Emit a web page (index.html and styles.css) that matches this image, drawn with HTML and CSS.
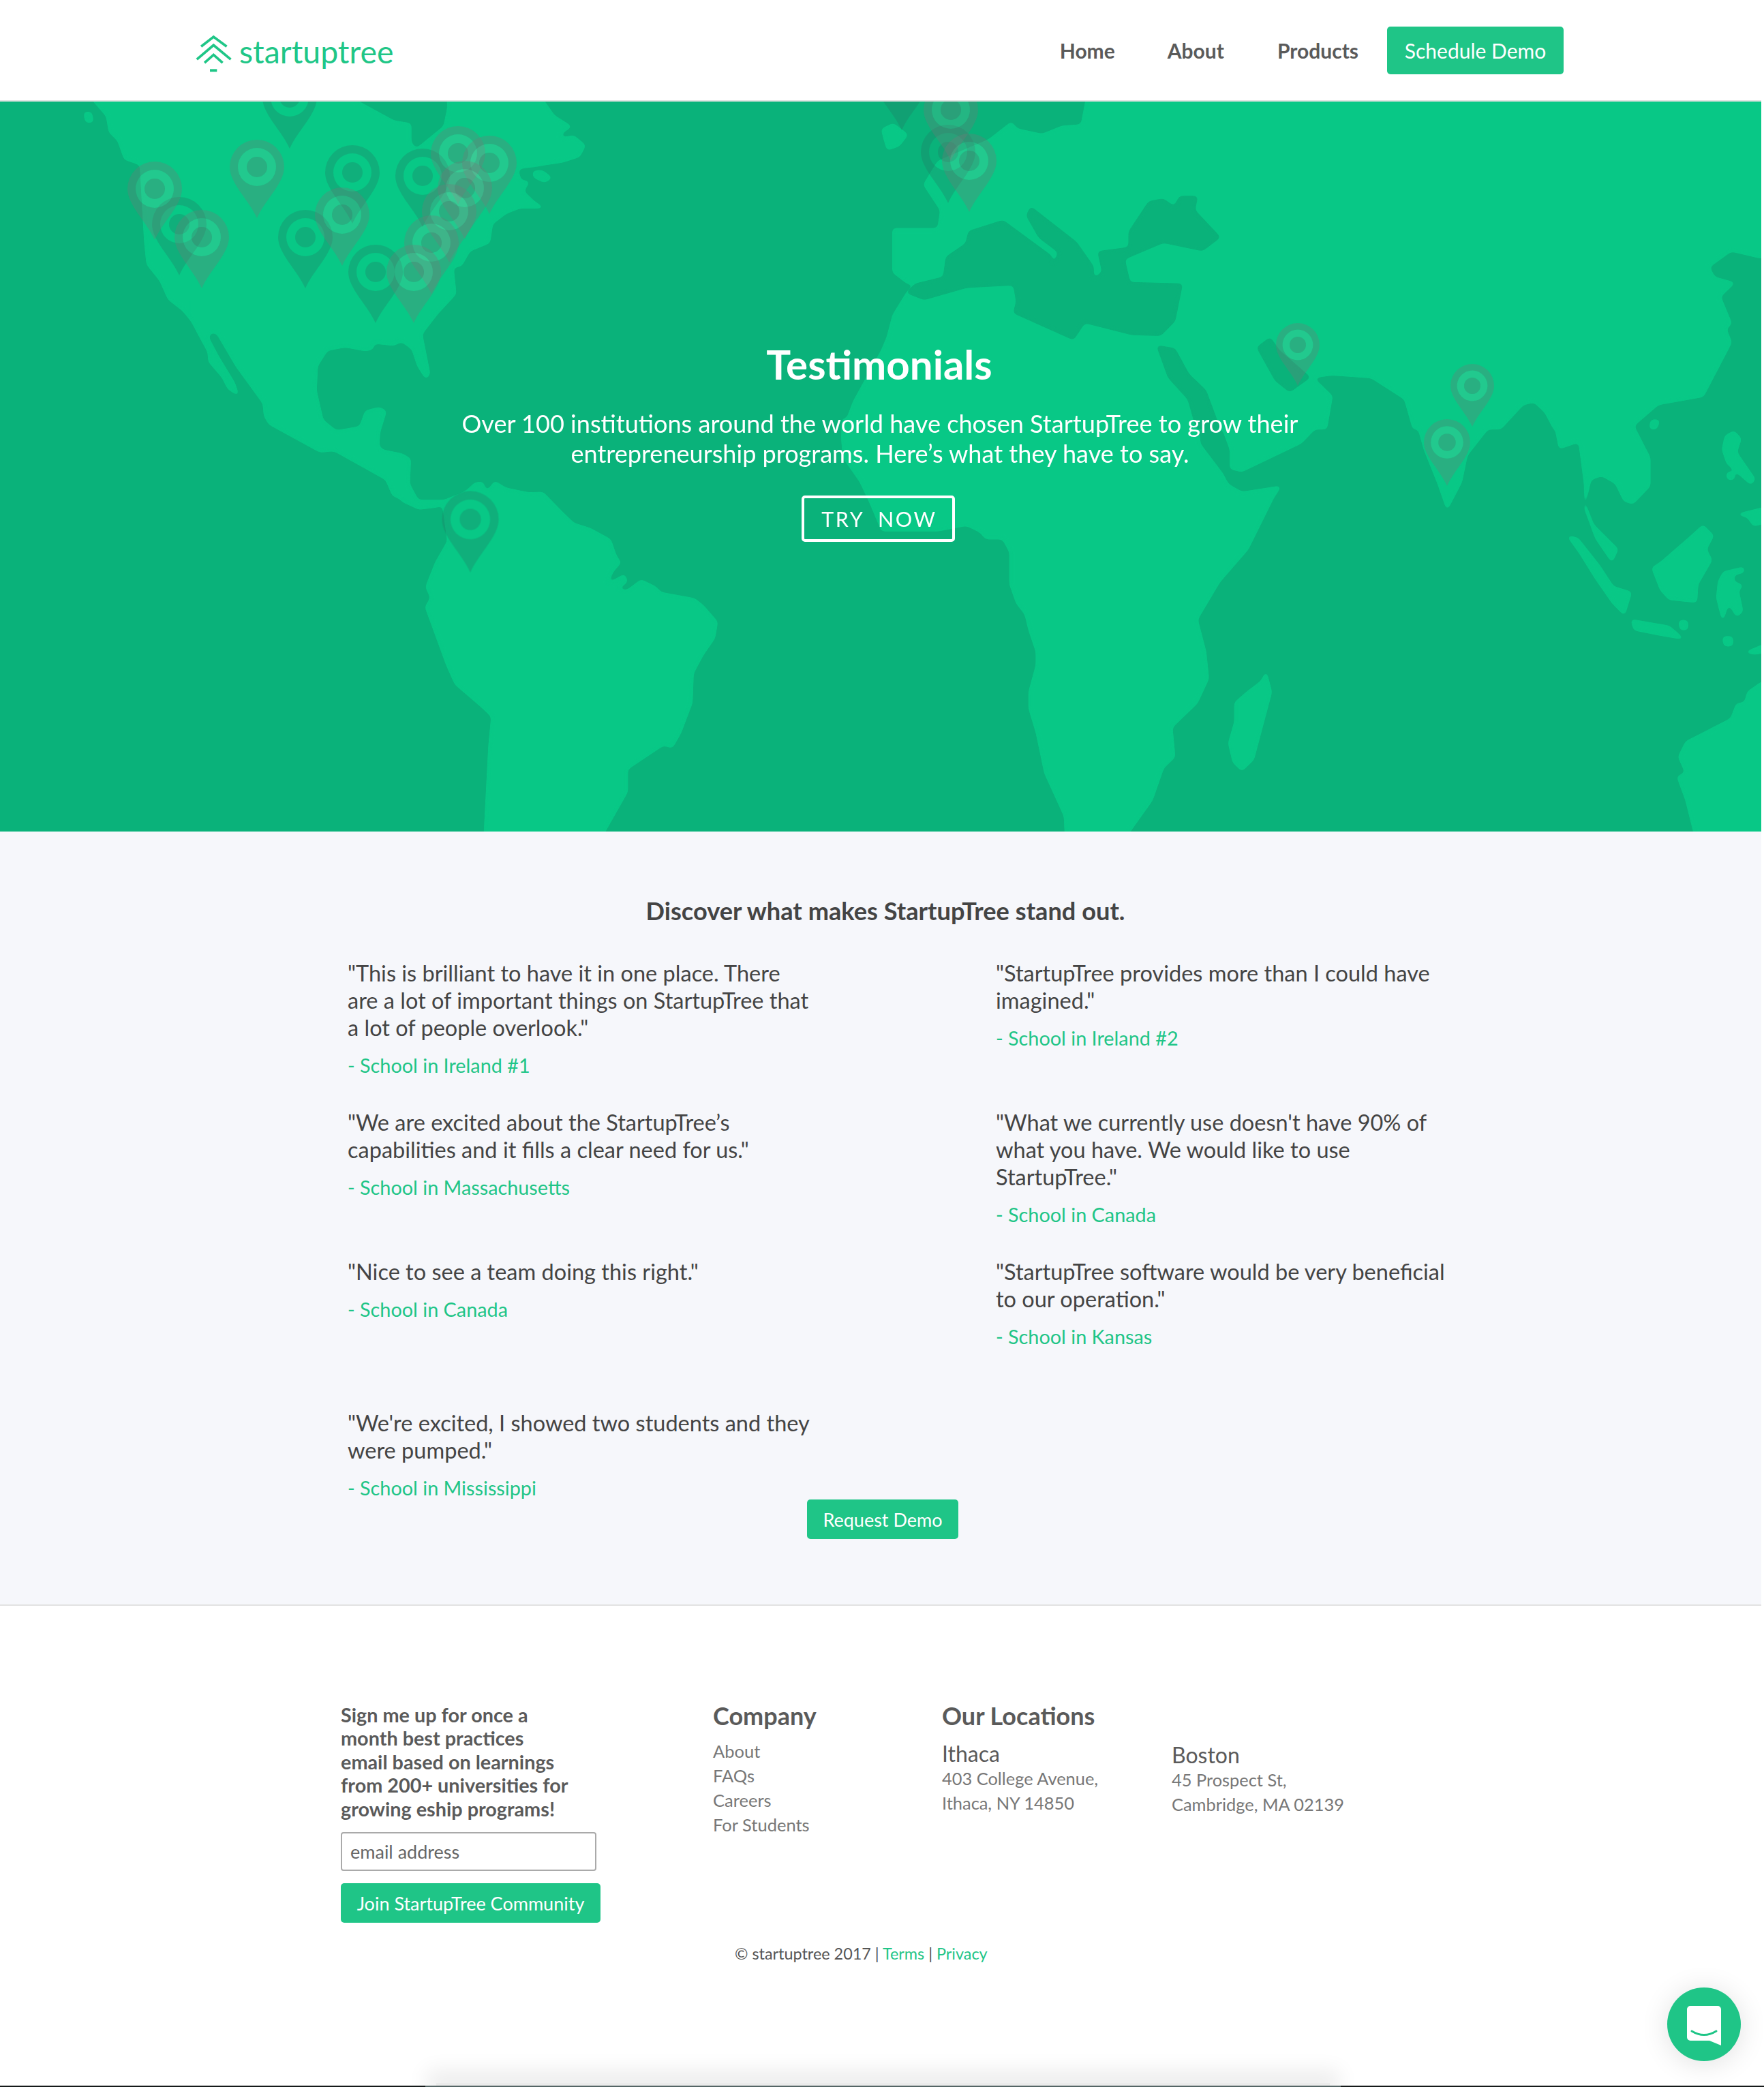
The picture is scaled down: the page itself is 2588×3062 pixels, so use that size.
FILE: index.html
```html
<!DOCTYPE html>
<html lang="en">
<head>
<meta charset="utf-8">
<title>Testimonials - StartupTree</title>
<link rel="stylesheet" href="styles.css">
</head>
<body>
<div class="page">
  <header class="topbar">
    <a class="brand" href="#">
      <svg class="brand-mark" viewBox="110 85 165 175" aria-hidden="true">
        <path class="brand-line" d="M137 140 192 97 250 140M118 197 192 134 268 197M152 212 192 177 232 212"/>
        <rect class="brand-foot" x="176" y="240" width="31" height="12"/>
      </svg>
      <span class="brand-name">startuptree</span>
    </a>
    <nav class="nav">
      <a class="nav-link nav-link-first" href="#">Home</a>
      <a class="nav-link" href="#">About</a>
      <a class="nav-link nav-link-last" href="#">Products</a>
      <a class="btn btn-nav" href="#">Schedule Demo</a>
    </nav>
  </header>

  <section class="hero">
    <svg class="map" viewBox="0 149 2584 1071" preserveAspectRatio="none" aria-hidden="true">
      <defs>
        <filter id="smooth" filterUnits="userSpaceOnUse" x="-60" y="80" width="2760" height="1240" color-interpolation-filters="sRGB">
          <feGaussianBlur stdDeviation="3"/>
          <feComponentTransfer><feFuncA type="linear" slope="10" intercept="-4.5"/></feComponentTransfer>
        </filter>
        <g id="pin-front">
          <path class="pin-body-front" fill-rule="evenodd" d="M0 75C-12 48-40 24-40 0A40 40 0 1 1 40 0C40 24 12 48 0 75ZM0-28A28 28 0 1 0 0 28 28 28 0 1 0 0-28Z"/>
          <path class="pin-ring" fill-rule="evenodd" d="M0-28A28 28 0 1 0 0 28 28 28 0 1 0 0-28ZM0-15A15 15 0 1 1 0 15 15 15 0 1 1 0-15Z"/>
          <circle class="pin-body-front" r="15"/>
        </g>
        <g id="pin-back">
          <path class="pin-body-back" fill-rule="evenodd" d="M0 75C-12 48-40 24-40 0A40 40 0 1 1 40 0C40 24 12 48 0 75ZM0-28A28 28 0 1 0 0 28 28 28 0 1 0 0-28Z"/>
          <circle class="pin-body-back" r="15"/>
        </g>
      </defs>
      <g filter="url(#smooth)">
      <g transform="scale(.825 .3954)">
        <path class="land" d="M160 300 165 370 190 430 195 490 210 520 222 590 250 610 258 900 262 980 285 1040 300 1110 325 1150 345 1200 700 1280 750 1225 810 1090 805 990 820 985 835 930 870 900 875 830 900 790 925 770 965 770 950 750 930 710 940 675 925 670 920 625 1000 600 1030 580 1040 540 1020 505 995 515 1000 490 1015 470 985 430 965 370 960 300 795 300 797 400 790 470 740 555 730 530 730 460 700 450 630 370 570 300Z"/>
        <path class="land" d="M150 418 162 418 165 452 153 452ZM948 638 965 635 980 660 968 675 950 657Z"/>
      </g>
      <g transform="translate(280 440) scale(.3333)">
        <path class="land" d="M-5 75 40 160 78 230 80 270 140 340 165 390 208 418 190 365 120 250 75 165 85 140 115 145 200 290 320 455 325 510 345 545 570 668 630 662 770 740 860 790 890 860 915 870 950 895 1000 885 960 810 965 700 930 680 840 662 825 640 830 580 858 490 830 475 770 490 745 560 640 578 580 530 550 400 555 290 600 220 680 205 770 222 800 215 805 180 920 175 975 215 1000 290 1035 345 1050 325 1015 150 1080 65 1000 0-5 0Z"/>
      </g>
      <g transform="translate(0 620) scale(.825 .3954)">
        <path class="land" d="M715 290 745 320 775 312 788 305 797 440 775 520 758 610 767 650 757 685 760 700 795 900 810 970 860 1060 875 1090 870 1200 860 1600 1055 1600 1075 1517 1115 1370 1115 1285 1180 1195 1195 1205 1210 1150 1230 1040 1232 930 1250 860 1270 800 1275 740 1250 680 1235 655 1175 632 1165 610 1140 585 1115 625 1095 620 1115 590 1110 565 1077 605 1090 550 1103 520 1095 495 1085 435 1050 395 1020 375 1000 335 965 260 940 262 900 245 880 220 865 262 858 222 845 225 830 255 790 290 745 290Z"/>
      </g>
      <g transform="translate(1294 0) scale(.825 .3954)">
        <path class="land" d="M370 300 1640 300 1640 955 1560 955 1510 930 1470 990 1480 1030 1515 1050 1490 1100 1510 1200 1500 1220 1510 1270 1490 1350 1460 1470 1380 1500 1330 1590 1195 1590 1180 1530 1160 1490 1140 1500 1100 1590 945 1590 930 1480 870 1400 800 1390 765 1400 800 1470 790 1590-68 1590-50 1490 0 1300 10 1250 20 1170 45 1085 60 1055 45 1050 20 1010 20 850 100 850 105 780 75 685 100 600 190 520 230 455 240 480 285 500 320 470 355 465Z"/>
        <path class="land" d="M0 480 20 460 45 500 30 540 10 555 5 520Z"/>
      </g>
      <g transform="translate(1294 620) scale(.825 .3954)">
        <path class="land" d="M-70-12-71 60-68 130-38 220-20 300 0 400 100 400 150 380 175 405 185 430 215 430 228 480 228 600 240 670 255 710 262 770 275 850 275 900 262 1000 262 1060 275 1150 290 1300 325 1460 328 1600 425 1600 440 1517 480 1400 500 1280 520 1240 515 1130 560 1040 580 950 575 850 560 730 600 590 650 470 695 280 708 238 640 260 615 230 605 190 565 80 560-12Z"/>
        <path class="land" d="M683 928 692 1000 660 1250 640 1290 625 1260 617 1190 628 1110 628 1040 650 1000 675 960Z"/>
        <path class="land" d="M600-12 620 100 620 170 640 180 745 75 785-12Z"/>
        <path class="land" d="M950-12 965 100 990 230 1005 320 1015 280 1030 220 1040 120 1090-12Z"/>
        <path class="land" d="M1195-12 1205 95 1240 70 1250 230 1250 320 1270 430 1298 515 1308 470 1265 380 1250 300 1260 210 1280 195 1305 225 1320 290 1335 300 1365 235 1365 130 1330-12Z"/>
        <path class="land" d="M1220 422 1237 430 1275 530 1300 610 1332 630 1320 712 1300 670 1270 580 1240 480Z"/>
        <path class="land" d="M1460 382 1478 420 1465 470 1475 510 1450 600 1448 665 1400 655 1385 620 1370 540 1385 520 1440 420Z"/>
        <path class="land" d="M1333 733 1400 757 1424 802 1385 788 1338 768ZM1418 736 1432 736 1432 767 1420 767ZM1496 796 1512 796 1512 827 1498 827Z"/>
        <path class="land" d="M1497 555 1532 538 1532 555 1515 562 1513 590 1530 605 1522 622 1530 700 1520 718 1505 665 1495 732 1485 650 1488 590Z"/>
        <path class="land" d="M1500 50 1515 33 1527 60 1519 110 1552 210 1545 228 1503 150 1495 100ZM1503 186 1515 186 1515 210 1504 210Z"/>
        <path class="land" d="M1523 340 1620 290 1620 345 1550 382 1540 350ZM1537 852 1620 780 1620 830 1552 858ZM1368-8 1382-8 1377 22 1366 22Z"/>
        <path class="land" d="M1640 950 1564 965 1540 1000 1535 1040 1520 1045 1510 1100 1430 1185 1417 1240 1430 1300 1415 1315 1430 1400 1445 1525 1450 1600 1640 1600Z"/>
      </g>
      </g>
      <g filter="url(#smooth)">
      <g transform="translate(1294 0) scale(.825 .3954)">
        <path class="sea" d="M45 1085 75 1110 150 1065 235 1055 240 1120 235 1160 340 1258 360 1195 445 1240 495 1243 520 1190 533 1055 440 1050 430 960 500 898 570 928 600 880 555 780 560 730 530 730 520 770 500 740 475 750 440 860 440 920 385 935 393 1010 375 1040 375 990 345 900 265 770 258 800 280 880 315 935 305 990 300 950 215 820 155 860 150 905 115 955 110 1030 60 1055Z"/>
        <path class="sea" d="M490 1285 520 1295 545 1390 575 1450 600 1590 560 1590 545 1480 510 1400Z"/>
        <path class="sea" d="M668 1290 690 1255 705 1300 760 1400 725 1452 700 1410Z"/>
      </g>
      </g>
      <use href="#pin-back" transform="translate(425 143)"/>
      <use href="#pin-back" transform="translate(517 253)"/>
      <use href="#pin-back" transform="translate(620 258)"/>
      <use href="#pin-back" transform="translate(448 348)"/>
      <use href="#pin-back" transform="translate(551 399)"/>
      <use href="#pin-back" transform="translate(263 329)"/>
      <use href="#pin-back" transform="translate(690 762) scale(1.04)"/>
      <use href="#pin-back" transform="translate(1323 116)"/>
      <use href="#pin-back" transform="translate(1391 223)"/>
      <use href="#pin-front" transform="translate(227 277)"/>
      <use href="#pin-front" transform="translate(296 348)"/>
      <use href="#pin-front" transform="translate(377 245)"/>
      <use href="#pin-front" transform="translate(502 315)"/>
      <use href="#pin-front" transform="translate(672 225)"/>
      <use href="#pin-front" transform="translate(718 239)"/>
      <use href="#pin-front" transform="translate(682 276)"/>
      <use href="#pin-front" transform="translate(659 310)"/>
      <use href="#pin-front" transform="translate(633 356)"/>
      <use href="#pin-front" transform="translate(607 399)"/>
      <use href="#pin-front" transform="translate(1395 161)"/>
      <use href="#pin-front" transform="translate(1422 236)"/>
      <use href="#pin-front" transform="translate(1904 506) scale(.8)"/>
      <use href="#pin-front" transform="translate(2160 566) scale(.8)"/>
      <use href="#pin-front" transform="translate(2123 649) scale(.85)"/>
    </svg>
    <div class="hero-copy">
      <h1 class="hero-title">Testimonials</h1>
      <p class="hero-sub">Over 100 institutions around the world have chosen StartupTree to grow their entrepreneurship programs. Here’s what they have to say.</p>
      <a class="btn-outline" href="#">TRY&nbsp; NOW</a>
    </div>
  </section>

  <section class="quotes">
    <h2 class="quotes-title">Discover what makes StartupTree stand out.</h2>
    <div class="quote-grid">
      <article class="quote"><p class="quote-text">"This is brilliant to have it in one place. There are a lot of important things on StartupTree that a lot of people overlook."</p><p class="quote-who">- School in Ireland #1</p></article>
      <article class="quote"><p class="quote-text">"StartupTree provides more than I could have imagined."</p><p class="quote-who">- School in Ireland #2</p></article>
      <article class="quote"><p class="quote-text">"We are excited about the StartupTree’s capabilities and it fills a clear need for us."</p><p class="quote-who">- School in Massachusetts</p></article>
      <article class="quote"><p class="quote-text">"What we currently use doesn't have 90% of what you have. We would like to use StartupTree."</p><p class="quote-who">- School in Canada</p></article>
      <article class="quote"><p class="quote-text">"Nice to see a team doing this right."</p><p class="quote-who">- School in Canada</p></article>
      <article class="quote"><p class="quote-text">"StartupTree software would be very beneficial to our operation."</p><p class="quote-who">- School in Kansas</p></article>
      <article class="quote"><p class="quote-text">"We're excited, I showed two students and they were pumped."</p><p class="quote-who">- School in Mississippi</p></article>
    </div>
    <a class="btn btn-request" href="#">Request Demo</a>
  </section>

  <footer class="footer">
    <div class="footer-cols">
      <form class="signup">
        <p class="signup-text">Sign me up for once a month best practices email based on learnings from 200+ universities for growing eship programs!</p>
        <input class="signup-input" type="text" placeholder="email address">
        <a class="btn btn-join" href="#">Join StartupTree Community</a>
      </form>
      <div class="company">
        <h3 class="footer-head">Company</h3>
        <ul class="footer-links">
          <li><a href="#">About</a></li>
          <li><a href="#">FAQs</a></li>
          <li><a href="#">Careers</a></li>
          <li><a href="#">For Students</a></li>
        </ul>
      </div>
      <div class="locations">
        <h3 class="footer-head">Our Locations</h3>
        <div class="location-row">
          <div class="location">
            <h4 class="city">Ithaca</h4>
            <p class="address">403 College Avenue,<br>Ithaca, NY 14850</p>
          </div>
          <div class="location location-alt">
            <h4 class="city">Boston</h4>
            <p class="address">45 Prospect St,<br>Cambridge, MA 02139</p>
          </div>
        </div>
      </div>
    </div>
    <p class="copyright">© startuptree 2017 | <a href="#">Terms</a> | <a href="#">Privacy</a></p>
  </footer>
</div>

<div class="chat">
  <svg class="chat-icon" viewBox="0 0 108 108" aria-hidden="true">
    <path class="chat-bubble" d="M34 27H74A5 5 0 0 1 79 32V85L62 78H34A5 5 0 0 1 29 73V32A5 5 0 0 1 34 27Z"/>
    <path class="chat-smile" d="M36 64Q54 75 72 64"/>
  </svg>
</div>
<div class="screen-shadow"></div>
<div class="screen-edge"></div>
</body>
</html>
```

FILE: styles.css
```css
* { box-sizing: border-box; }
html, body { margin: 0; padding: 0; height: 3062px; overflow: hidden; background: #fff; }
body { position: relative; font-family: "Lato", "Liberation Sans", sans-serif; color: #444; }
a { text-decoration: none; color: inherit; }
h1, h2, h3, h4, p, ul { margin: 0; padding: 0; }
ul { list-style: none; }

.page { width: 2584px; }

.topbar { height: 149px; border-bottom: 2px solid #e2e2e2; display: flex; align-items: flex-start; justify-content: space-between; padding: 39px 290px 0 286px; background: #fff; }
.brand { display: flex; align-items: center; height: 70px; margin-top: 4px; }
.brand-mark { width: 55px; height: 58px; margin-right: 10px; margin-top: 2px; }
.brand-line { fill: none; stroke: #1fc687; stroke-width: 11; }
.brand-foot { fill: #1fc687; }
.brand-name { font-size: 46.4px; color: #1fc687; line-height: 58px; margin-bottom: 6px; }

.nav { display: flex; align-items: center; height: 70px; }
.nav-link { font-size: 30px; font-weight: 700; color: #5a5a5a; margin-right: 78px; }
.nav-link-first { margin-right: 77px; }
.nav-link-last { margin-right: 42px; }

.btn { display: inline-flex; align-items: center; justify-content: center; background: #1fc587; color: #fff; border-radius: 5px; }
.btn-nav { width: 259px; height: 70px; font-size: 30px; }

.hero { position: relative; height: 1071px; background: #0ab27a; overflow: hidden; }
.map { position: absolute; inset: 0; width: 100%; height: 100%; }
.land { fill: #08c886; stroke: #08c886; stroke-width: 3; stroke-linejoin: round; vector-effect: non-scaling-stroke; }
.sea { fill: #0ab27a; stroke: #0ab27a; stroke-width: 3; stroke-linejoin: round; vector-effect: non-scaling-stroke; }
.pin-body-front { fill: rgba(120, 120, 120, .3); }
.pin-ring { fill: rgba(190, 205, 190, .15); }
.pin-body-back { fill: rgba(35, 120, 100, .3); }

.hero-copy { position: relative; display: flex; flex-direction: column; align-items: center; padding-top: 349px; }
.hero-title { font-size: 60px; line-height: 72px; font-weight: 700; color: #fff; margin: 0 4px 29px 0; }
.hero-sub { width: 1300px; font-size: 36.1px; line-height: 44px; text-align: center; color: #fff; margin: 0 2px 40px 0; }
.btn-outline { display: flex; align-items: center; justify-content: center; width: 225px; height: 68px; margin-right: 8px; padding-left: 4px; border: 4px solid #fff; border-radius: 5px; color: #fff; font-size: 30.5px; letter-spacing: 2.6px; }

.quotes { height: 1136px; background: #f6f7fb; border-bottom: 2px solid #e2e2e2; padding-top: 92px; }
.quotes-title { font-size: 36.2px; line-height: 48px; font-weight: 700; text-align: center; color: #444; margin: 0 0 48px 14px; }
.quote-grid { display: grid; grid-template-columns: 951px 685px; grid-template-rows: 219px 219px 222px 132px; margin-left: 510px; }
.quote-text { font-size: 32.5px; line-height: 40px; color: #444; margin-bottom: 15px; }
.quote-who { font-size: 28.8px; line-height: 40px; color: #1fc587; }
.quote { width: 685px; }
.btn-request { width: 222px; height: 58px; margin-left: 1184px; font-size: 27px; }

.footer { padding-top: 143px; }
.footer-cols { display: flex; align-items: flex-start; margin-left: 500px; height: 351px; }
.signup { width: 546px; }
.signup-text { width: 340px; font-size: 28.8px; line-height: 34.4px; font-weight: 700; color: #5a5a5a; margin-bottom: 17px; }
.signup-input { display: block; width: 375px; height: 57px; border: 2px solid #aaa; border-radius: 4px; padding: 0 12px; font: 27px "Lato", sans-serif; color: #555; margin-bottom: 18px; }
.signup-input::placeholder { color: #666; opacity: 1; }
.btn-join { width: 381px; height: 58px; font-size: 27px; }

.company { width: 336px; margin-top: -2px; }
.locations { margin-top: -2px; }
.footer-head { font-size: 36px; line-height: 40px; font-weight: 700; color: #5a5a5a; margin-bottom: 14px; }
.footer-links li { font-size: 25.5px; line-height: 36px; color: #777; }

.location-row { display: flex; }
.location { width: 337px; margin-top: 3px; }
.location-alt { margin-top: 5px; }
.city { font-size: 32px; line-height: 38px; font-weight: 400; color: #5a5a5a; }
.address { font-size: 25.4px; line-height: 35.5px; color: #777; }

.copyright { font-size: 23.4px; line-height: 32px; color: #555; margin-left: 1078px; }
.copyright a { color: #1fc587; }

.chat { position: absolute; left: 2446px; top: 2916px; width: 108px; height: 108px; border-radius: 50%; background: #1fc587; box-shadow: 0 4px 40px rgba(0, 0, 0, .12); }
.chat-icon { display: block; width: 108px; height: 108px; }
.chat-bubble { fill: #fff; }
.chat-smile { fill: none; stroke: #1fc587; stroke-width: 3; stroke-linecap: round; }

.screen-shadow { position: absolute; left: 640px; top: 3056px; width: 1311px; height: 6px; background: rgba(0, 0, 0, .08); box-shadow: 0 -4px 30px 14px rgba(0, 0, 0, .08); }
.screen-edge { position: absolute; left: 0; top: 3060px; width: 2588px; height: 2px; background: linear-gradient(90deg, #151a1a 624px, #556565 624px, #556565 1967px, #151a1a 1967px); }
```
